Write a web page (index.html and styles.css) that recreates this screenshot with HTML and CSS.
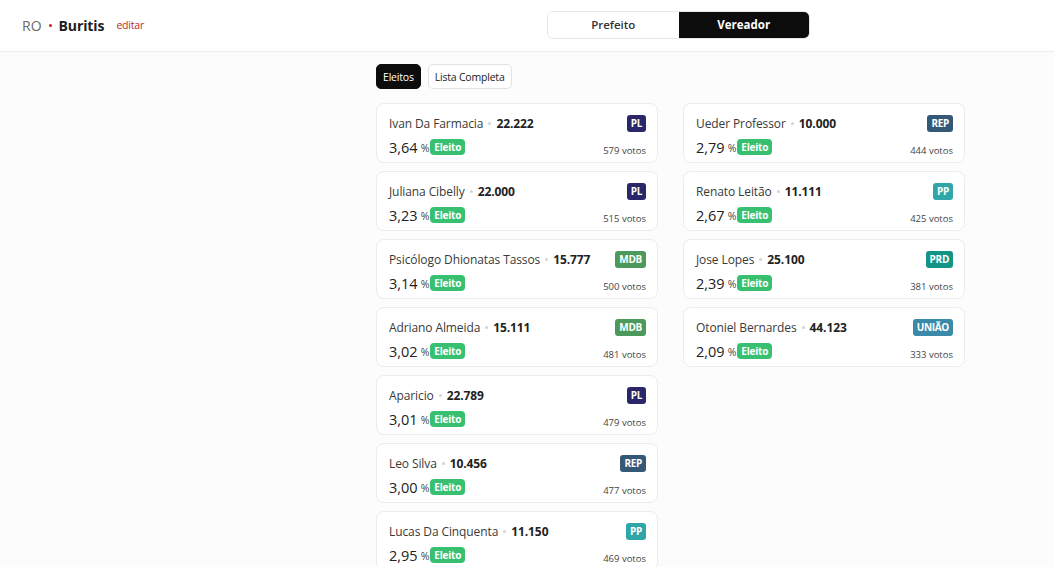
FILE: index.html
```html
<!DOCTYPE html>
<html>
<head>
    <meta charset="utf-8">
    <link rel="stylesheet" href="styles.css">
</head>
<body>
    <!-- top bar: city and office switch -->
    <div class="header">
        <div class="place">
            <span class="uf">RO</span>
            <span class="sep"></span>
            <span class="city">Buritis</span>
            <a class="edit" href="#">editar</a>
        </div>
        <div class="office-switch">
            <button class="office">Prefeito</button>
            <button class="office active">Vereador</button>
        </div>
    </div>

    <div class="main">
        <div class="results">
            <div class="filters">
                <button class="filter active">Eleitos</button>
                <button class="filter">Lista Completa</button>
            </div>

            <div class="grid">
                <div class="col">
                    <div class="card">
                        <div class="row">
                            <div class="name">Ivan Da Farmacia <span class="dot"></span> <b>22.222</b></div>
                            <span class="party pl">PL</span>
                        </div>
                        <div class="row">
                            <div class="pct">3,64 <small>%</small> <span class="elected">Eleito</span></div>
                            <span class="votes">579 votos</span>
                        </div>
                    </div>
                    <div class="card">
                        <div class="row">
                            <div class="name">Juliana Cibelly <span class="dot"></span> <b>22.000</b></div>
                            <span class="party pl">PL</span>
                        </div>
                        <div class="row">
                            <div class="pct">3,23 <small>%</small> <span class="elected">Eleito</span></div>
                            <span class="votes">515 votos</span>
                        </div>
                    </div>
                    <div class="card">
                        <div class="row">
                            <div class="name">Psicólogo Dhionatas Tassos <span class="dot"></span> <b>15.777</b></div>
                            <span class="party mdb">MDB</span>
                        </div>
                        <div class="row">
                            <div class="pct">3,14 <small>%</small> <span class="elected">Eleito</span></div>
                            <span class="votes">500 votos</span>
                        </div>
                    </div>
                    <div class="card">
                        <div class="row">
                            <div class="name">Adriano Almeida <span class="dot"></span> <b>15.111</b></div>
                            <span class="party mdb">MDB</span>
                        </div>
                        <div class="row">
                            <div class="pct">3,02 <small>%</small> <span class="elected">Eleito</span></div>
                            <span class="votes">481 votos</span>
                        </div>
                    </div>
                    <div class="card">
                        <div class="row">
                            <div class="name">Aparicio <span class="dot"></span> <b>22.789</b></div>
                            <span class="party pl">PL</span>
                        </div>
                        <div class="row">
                            <div class="pct">3,01 <small>%</small> <span class="elected">Eleito</span></div>
                            <span class="votes">479 votos</span>
                        </div>
                    </div>
                    <div class="card">
                        <div class="row">
                            <div class="name">Leo Silva <span class="dot"></span> <b>10.456</b></div>
                            <span class="party rep">REP</span>
                        </div>
                        <div class="row">
                            <div class="pct">3,00 <small>%</small> <span class="elected">Eleito</span></div>
                            <span class="votes">477 votos</span>
                        </div>
                    </div>
                    <div class="card">
                        <div class="row">
                            <div class="name">Lucas Da Cinquenta <span class="dot"></span> <b>11.150</b></div>
                            <span class="party pp">PP</span>
                        </div>
                        <div class="row">
                            <div class="pct">2,95 <small>%</small> <span class="elected">Eleito</span></div>
                            <span class="votes">469 votos</span>
                        </div>
                    </div>
                </div>

                <div class="col">
                    <div class="card">
                        <div class="row">
                            <div class="name">Ueder Professor <span class="dot"></span> <b>10.000</b></div>
                            <span class="party rep">REP</span>
                        </div>
                        <div class="row">
                            <div class="pct">2,79 <small>%</small> <span class="elected">Eleito</span></div>
                            <span class="votes">444 votos</span>
                        </div>
                    </div>
                    <div class="card">
                        <div class="row">
                            <div class="name">Renato Leitão <span class="dot"></span> <b>11.111</b></div>
                            <span class="party pp">PP</span>
                        </div>
                        <div class="row">
                            <div class="pct">2,67 <small>%</small> <span class="elected">Eleito</span></div>
                            <span class="votes">425 votos</span>
                        </div>
                    </div>
                    <div class="card">
                        <div class="row">
                            <div class="name">Jose Lopes <span class="dot"></span> <b>25.100</b></div>
                            <span class="party prd">PRD</span>
                        </div>
                        <div class="row">
                            <div class="pct">2,39 <small>%</small> <span class="elected">Eleito</span></div>
                            <span class="votes">381 votos</span>
                        </div>
                    </div>
                    <div class="card">
                        <div class="row">
                            <div class="name">Otoniel Bernardes <span class="dot"></span> <b>44.123</b></div>
                            <span class="party uniao">UNIÃO</span>
                        </div>
                        <div class="row">
                            <div class="pct">2,09 <small>%</small> <span class="elected">Eleito</span></div>
                            <span class="votes">333 votos</span>
                        </div>
                    </div>
                </div>
            </div>
        </div>
    </div>
</body>
</html>
```

FILE: styles.css
```css
body {
    margin: 0;
    font-family: "Open Sans", "Noto Sans", sans-serif;
    background: #fff;
    color: #222;
}

button {
    font-family: inherit;
    cursor: pointer;
}

/* header */
.header {
    height: 52px;
    box-sizing: border-box;
    border-bottom: 1px solid #ececec;
    background: #fff;
    display: flex;
    align-items: center;
    padding: 0 22px;
}

.place {
    width: 525px;
    display: flex;
    align-items: center;
    font-size: 14px;
}

.uf {
    color: #6a6a6a;
}

.sep {
    width: 3px;
    height: 3px;
    border-radius: 50%;
    background: #c0272d;
    margin: 0 7px;
}

.city {
    font-weight: 700;
    color: #1d1d1d;
    letter-spacing: -0.1px;
}

.edit {
    color: #c0272d;
    font-size: 10.5px;
    letter-spacing: -0.2px;
    text-decoration: none;
    margin-left: 12px;
    margin-top: -2px;
}

.office-switch {
    display: flex;
    width: 263px;
    height: 28px;
    border: 1px solid #e6e6e6;
    border-radius: 6px;
    overflow: hidden;
    box-sizing: border-box;
    margin-top: -2px;
}

.office {
    flex: 1;
    border: none;
    background: #fff;
    color: #333;
    font-size: 11.5px;
    font-weight: 600;
}

.office.active {
    background: #0c0c0d;
    color: #fff;
    font-weight: 700;
}

/* results */
.main {
    background: #fcfcfc;
    height: 515px;
    overflow: hidden;
}

.results {
    padding: 12px 0 0 376px;
}

.filters {
    display: flex;
    gap: 7px;
    margin-bottom: 14px;
}

.filter {
    height: 25px;
    padding: 0 6px;
    border: 1px solid #e2e2e2;
    border-radius: 5px;
    background: #fff;
    color: #222;
    font-size: 10.5px;
    letter-spacing: -0.2px;
}

.filter.active {
    background: #0c0c0d;
    border-color: #0c0c0d;
    color: #fff;
}

.grid {
    display: flex;
    gap: 25px;
}

.col {
    width: 282px;
    display: flex;
    flex-direction: column;
    gap: 8px;
}

.card {
    height: 60px;
    box-sizing: border-box;
    background: #fff;
    border: 1px solid #ececec;
    border-radius: 8px;
    padding: 9px 11px 0 12px;
}

.row {
    display: flex;
    justify-content: space-between;
    align-items: center;
}

.row + .row {
    margin-top: 4px;
}

.name {
    font-size: 12px;
    color: #3a3a3a;
    display: flex;
    align-items: center;
    height: 20px;
    letter-spacing: -0.1px;
}

.name b {
    color: #222;
    margin-left: 5px;
}

.dot {
    width: 3px;
    height: 3px;
    border-radius: 50%;
    background: #d4d4d4;
    margin-left: 5px;
}

.party {
    font-size: 10px;
    font-weight: 700;
    color: #fff;
    border-radius: 3px;
    padding: 1px 4px;
    line-height: 15px;
    letter-spacing: -0.3px;
}

.pl { background: #29266a; }
.rep { background: #355876; }
.mdb { background: #4b9a5b; }
.pp { background: #2fa6a8; }
.prd { background: #139585; }
.uniao { background: #3a8aa8; }

.pct {
    font-size: 14.5px;
    color: #222;
    display: flex;
    align-items: center;
}

.pct small {
    font-size: 10.5px;
    color: #444;
    margin: 2px 1px 0 3px;
}

.elected {
    font-size: 10px;
    font-weight: 700;
    color: #fff;
    background: #36c070;
    border-radius: 4px;
    padding: 0 4px;
    line-height: 16px;
    letter-spacing: -0.2px;
}

.votes {
    font-size: 9.5px;
    color: #444;
    margin-top: 7px;
}
```
